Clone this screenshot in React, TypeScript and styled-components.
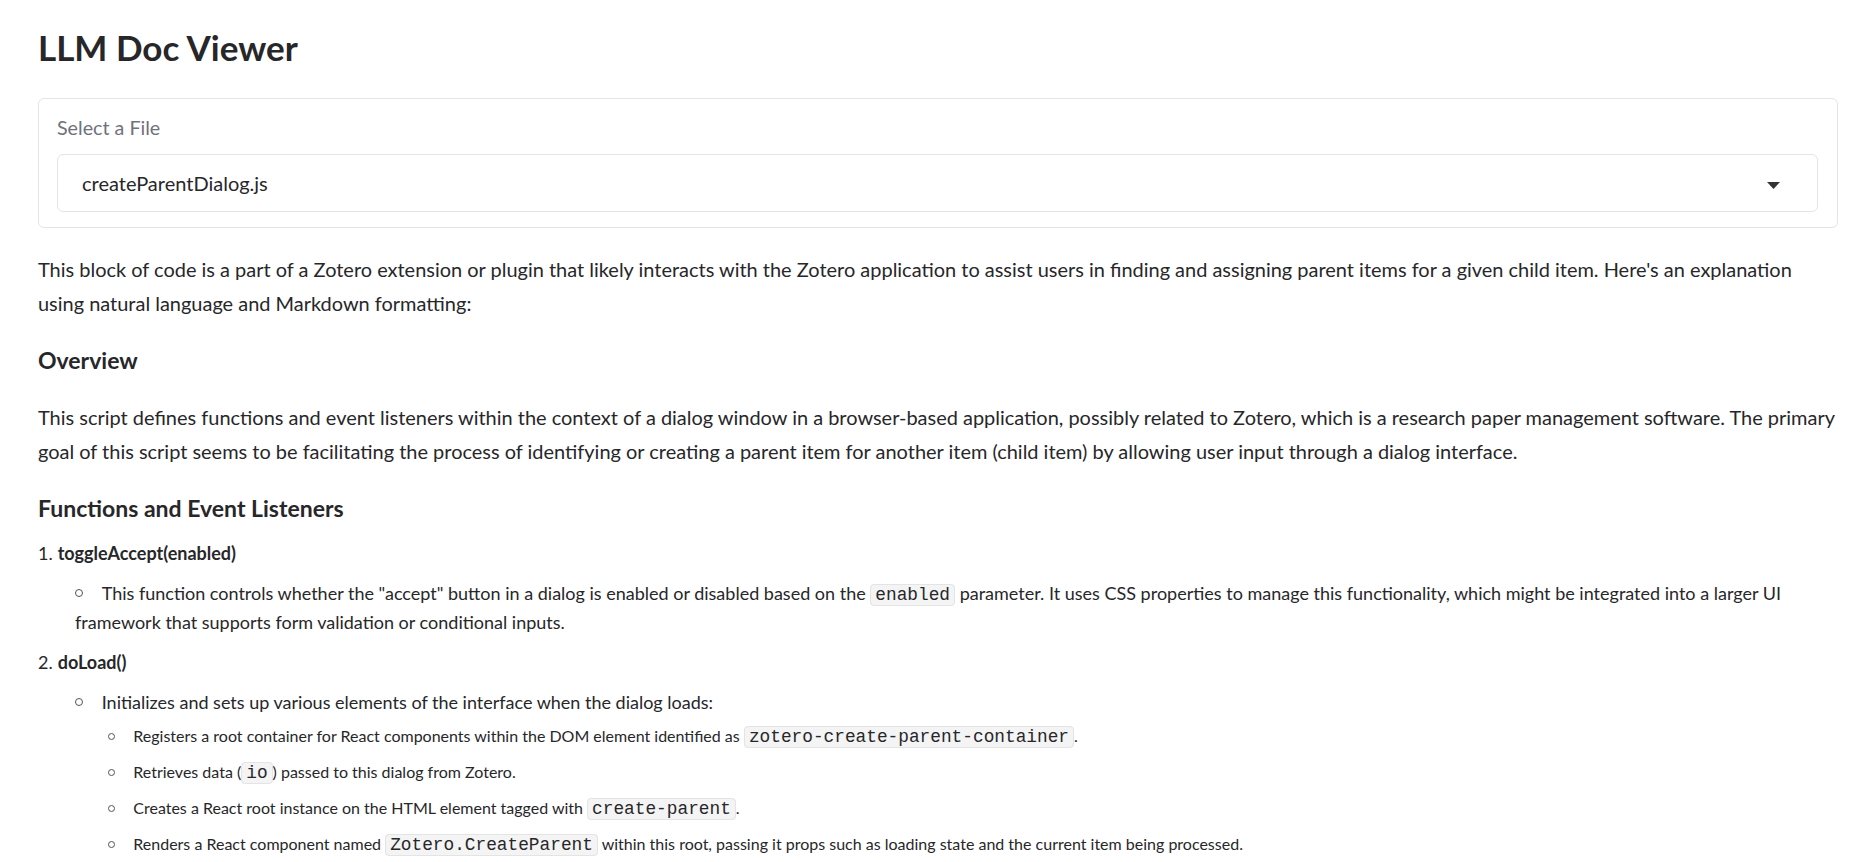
import React from "react";
import styled, { createGlobalStyle } from "styled-components";

const GlobalStyle = createGlobalStyle`
  html, body {
    margin: 0;
    padding: 0;
    background: #ffffff;
  }
  body {
    font-family: Lato, "Noto Sans", sans-serif;
    color: #27272a;
    -webkit-font-smoothing: antialiased;
  }
`;

const Page = styled.main`
  width: 1800px;
  padding: 26px 0 0 38px;
`;

const Title = styled.h1`
  margin: 0;
  font-size: 35px;
  line-height: 42px;
  font-weight: 700;
  color: #27272a;
`;

const Card = styled.section`
  margin-top: 30px;
  border: 1px solid #e4e4e7;
  border-radius: 6px;
  background: #ffffff;
  padding: 17px 19px 15px 18px;
`;

const Label = styled.label`
  display: block;
  font-size: 19.7px;
  line-height: 24px;
  color: #71717a;
  margin-bottom: 14px;
`;

const Select = styled.div`
  display: flex;
  align-items: center;
  justify-content: space-between;
  box-sizing: border-box;
  height: 58px;
  border: 1px solid #e4e4e7;
  border-radius: 6px;
  padding: 0 37px 0 24px;
  font-size: 20px;
  line-height: 24px;
  color: #27272a;
  background: #ffffff;
`;

const Caret = styled.svg`
  width: 13px;
  height: 7px;
  margin-top: 4px;
  fill: #333333;
`;

const Prose = styled.article`
  margin-top: 24px;
`;

const Paragraph = styled.p`
  margin: 24.9px 0 0;
  font-size: 19.97px;
  line-height: 34.3px;
  &:first-child {
    margin-top: 0;
  }
`;

const Heading = styled.h3`
  margin: 24.7px 0 0;
  font-size: 23px;
  line-height: 30px;
  font-weight: 700;
  color: #27272a;
`;

const Steps = styled.ol`
  list-style: none;
  margin: 15.8px 0 0;
  padding: 0;
  counter-reset: step;
`;

const Step = styled.li`
  counter-increment: step;
  font-size: 18px;
  line-height: 28.6px;
  & + & {
    margin-top: 11.4px;
  }
  &::before {
    content: counter(step) ".";
    display: inline-block;
    width: 19.7px;
  }
  strong {
    font-weight: 700;
  }
`;

const Bullets = styled.ul<{ $nested?: boolean }>`
  list-style: none;
  margin: ${(p) => (p.$nested ? "6px" : "11.6px")} 0 0;
  padding: 0 0 0 ${(p) => (p.$nested ? "33.3px" : "37px")};
`;

const Bullet = styled.li<{ $nested?: boolean }>`
  font-size: ${(p) => (p.$nested ? "16px" : "18px")};
  line-height: ${(p) => (p.$nested ? "25.6px" : "28.6px")};
  & + & {
    margin-top: 10.4px;
  }
  &::before {
    content: "";
    display: inline-block;
    box-sizing: border-box;
    width: ${(p) => (p.$nested ? "7px" : "8px")};
    height: ${(p) => (p.$nested ? "7px" : "8px")};
    border: 1.5px solid #52525b;
    border-radius: 50%;
    margin-right: ${(p) => (p.$nested ? "18px" : "18.7px")};
    vertical-align: ${(p) => (p.$nested ? "2px" : "3px")};
  }
`;

const Code = styled.code`
  font-family: "Liberation Mono", "DejaVu Sans Mono", monospace;
  font-size: 17.8px;
  line-height: 1.1;
  padding: 0 4px;
  border: 1px solid #e4e4e7;
  border-radius: 4px;
  background: #f4f4f5;
  color: #27272a;
`;

export default function App() {
  return (
    <>
      <GlobalStyle />
      <Page>
        <Title>LLM Doc Viewer</Title>
        <Card>
          <Label>Select a File</Label>
          <Select>
            <span>createParentDialog.js</span>
            <Caret viewBox="0 0 13 7" aria-hidden="true">
              <polygon points="0,0 13,0 6.5,7" />
            </Caret>
          </Select>
        </Card>
        <Prose>
          <Paragraph>
            This block of code is a part of a Zotero extension or plugin that likely interacts with the Zotero
            application to assist users in finding and assigning parent items for a given child item. Here's an
            explanation using natural language and Markdown formatting:
          </Paragraph>
          <Heading>Overview</Heading>
          <Paragraph>
            This script defines functions and event listeners within the context of a dialog window in a
            browser-based application, possibly related to Zotero, which is a research paper management software.
            The primary goal of this script seems to be facilitating the process of identifying or creating a parent
            item for another item (child item) by allowing user input through a dialog interface.
          </Paragraph>
          <Heading>Functions and Event Listeners</Heading>
          <Steps>
            <Step>
              <strong>toggleAccept(enabled)</strong>
              <Bullets>
                <Bullet>
                  This function controls whether the "accept" button in a dialog is enabled or disabled based on
                  the <Code>enabled</Code> parameter. It uses CSS properties to manage this functionality, which
                  might be integrated into a larger UI framework that supports form validation or conditional inputs.
                </Bullet>
              </Bullets>
            </Step>
            <Step>
              <strong>doLoad()</strong>
              <Bullets>
                <Bullet>
                  Initializes and sets up various elements of the interface when the dialog loads:
                  <Bullets $nested>
                    <Bullet $nested>
                      Registers a root container for React components within the DOM element identified as{" "}
                      <Code>zotero-create-parent-container</Code>.
                    </Bullet>
                    <Bullet $nested>
                      Retrieves data (<Code>io</Code>) passed to this dialog from Zotero.
                    </Bullet>
                    <Bullet $nested>
                      Creates a React root instance on the HTML element tagged with <Code>create-parent</Code>.
                    </Bullet>
                    <Bullet $nested>
                      Renders a React component named <Code>Zotero.CreateParent</Code> within this root, passing it
                      props such as loading state and the current item being processed.
                    </Bullet>
                  </Bullets>
                </Bullet>
              </Bullets>
            </Step>
          </Steps>
        </Prose>
      </Page>
    </>
  );
}
